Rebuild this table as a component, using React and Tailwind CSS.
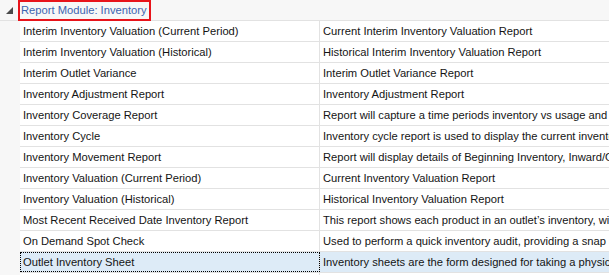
const rows = [
  ["Interim Inventory Valuation (Current Period)", "Current Interim Inventory Valuation Report"],
  ["Interim Inventory Valuation (Historical)", "Historical Interim Inventory Valuation Report"],
  ["Interim Outlet Variance", "Interim Outlet Variance Report"],
  ["Inventory Adjustment Report", "Inventory Adjustment Report"],
  ["Inventory Coverage Report", "Report will capture a time periods inventory vs usage and calculate coverage"],
  ["Inventory Cycle", "Inventory cycle report is used to display the current inventory cycle"],
  ["Inventory Movement Report", "Report will display details of Beginning Inventory, Inward/Outward movement"],
  ["Inventory Valuation (Current Period)", "Current Inventory Valuation Report"],
  ["Inventory Valuation (Historical)", "Historical Inventory Valuation Report"],
  ["Most Recent Received Date Inventory Report", "This report shows each product in an outlet\u2019s inventory, with the most recent received date"],
  ["On Demand Spot Check", "Used to perform a quick inventory audit, providing a snap shot of inventory"],
  ["Outlet Inventory Sheet", "Inventory sheets are the form designed for taking a physical inventory count"],
  ["", ""],
];

export default function App() {
  return (
    <div
      className="w-[609px] h-[275px] overflow-hidden bg-white text-[11.2px] text-[#141414]"
      style={{ fontFamily: "'Liberation Sans', Arial, sans-serif" }}
    >
      <div className="flex h-[21px] bg-[#f7f7f7] border-b border-[#e2e2e2]">
        <div className="w-[18px] flex items-center justify-center">
          <svg width="7" height="7" viewBox="0 0 7 7">
            <path d="M7 0 L7 7 L0 7 Z" fill="#4a4a4a" />
          </svg>
        </div>
        <div className="h-[21px] border-2 border-[#e8141b] pl-[1px] pr-[2px] flex items-center text-[#3d64b0]">
          Report Module: Inventory
        </div>
      </div>
      <div className="flex">
        <div className="w-[20px] shrink-0 bg-[#f7f7f7]" />
        <div className="flex-1">
          {rows.map(([name, desc], i) => {
            const sel = i === 11;
            return (
              <div
                key={i}
                className={
                  "flex h-[21px] border-b border-[#e2e2e2] whitespace-nowrap " +
                  (sel ? "bg-[#ddebf7]" : "bg-white")
                }
              >
                <div
                  className={
                    "w-[300px] shrink-0 pl-[3px] flex items-center border-r border-[#e2e2e2] " +
                    (sel ? "outline-1 outline-dotted outline-black -outline-offset-1" : "")
                  }
                >
                  {name}
                </div>
                <div className="flex-1 pl-[3px] flex items-center overflow-hidden">{desc}</div>
              </div>
            );
          })}
        </div>
      </div>
    </div>
  );
}
